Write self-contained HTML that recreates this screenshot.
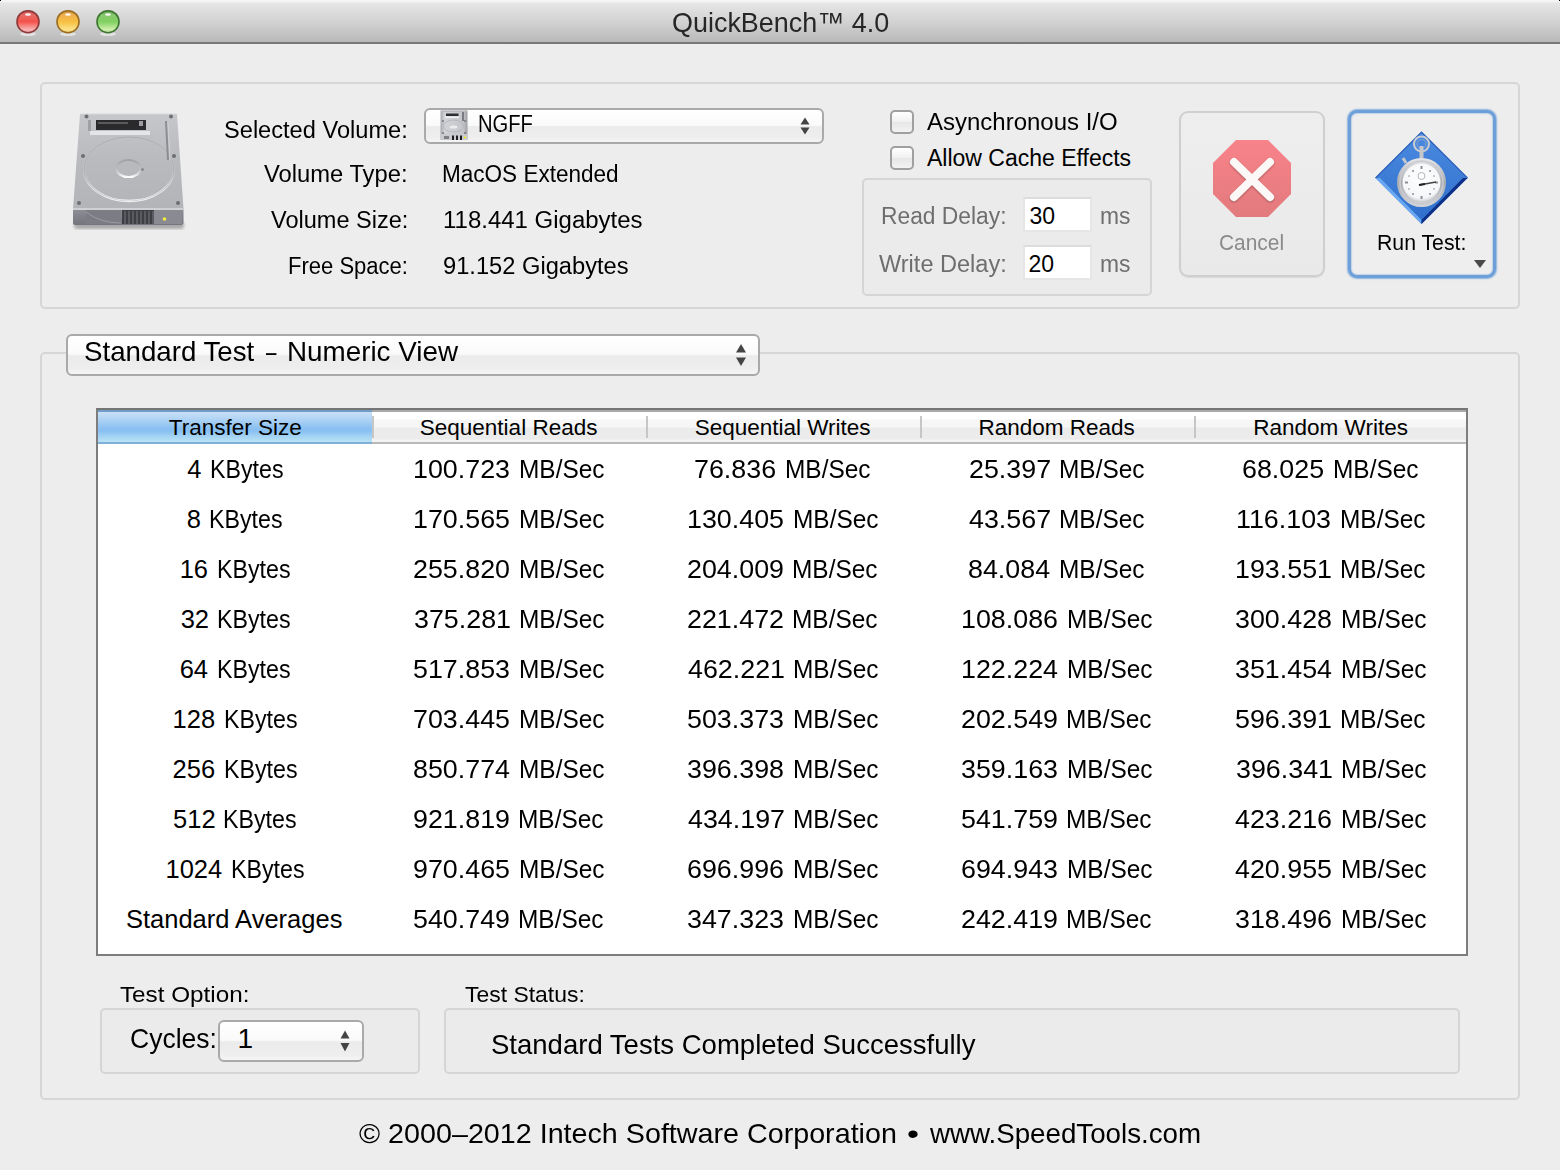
<!DOCTYPE html>
<html><head><meta charset="utf-8"><title>QuickBench 4.0</title>
<style>
html,body{margin:0;padding:0;}
body{width:1560px;height:1170px;position:relative;overflow:hidden;background:#ededed;font-family:"Liberation Sans",sans-serif;}
.t{position:absolute;white-space:nowrap;line-height:1;transform-origin:0 0;}
.a{position:absolute;box-sizing:border-box;}
#titlebar{left:0;top:0;width:1560px;height:44px;background:linear-gradient(#f6f6f6 0px,#f2f2f2 2px,#e6e6e6 3px,#d2d2d2 22px,#b9b9b9 42px);border-bottom:2px solid #787878;}
.light{position:absolute;top:10px;width:24px;height:24px;border-radius:50%;}
.grp{border:2px solid #d6d6d6;border-radius:5px;background:transparent;}
.popup{border:2px solid #a9a9a9;border-radius:6px;background:linear-gradient(#ffffff 0%,#fafafa 48%,#ebebeb 52%,#eeeeee 85%,#f5f5f5 100%);}
.cb{border:2px solid #a0a0a0;border-radius:5px;background:linear-gradient(#ffffff,#f0f0f0 50%,#e6e6e6 51%,#f3f3f3);}
.field{background:#fff;border:2px solid #e6e6e6;border-top-color:#dcdcdc;}
.inset{border:2px solid #d5d5d5;border-radius:5px;background:#ebebeb;}

</style></head><body>
<div class="a" id="titlebar"></div>
<svg class="a" style="left:0;top:0" width="140" height="44">
 <defs>
  <linearGradient id="gr" x1="0" y1="0" x2="0" y2="1"><stop offset="0" stop-color="#c84848"/><stop offset="0.2" stop-color="#e86a66"/><stop offset="0.5" stop-color="#f4524a"/><stop offset="0.85" stop-color="#f8b0b0"/><stop offset="1" stop-color="#e8a0a0"/></linearGradient>
  <linearGradient id="gy" x1="0" y1="0" x2="0" y2="1"><stop offset="0" stop-color="#c88a30"/><stop offset="0.2" stop-color="#f0b050"/><stop offset="0.5" stop-color="#f6c040"/><stop offset="0.85" stop-color="#fde288"/><stop offset="1" stop-color="#eccc70"/></linearGradient>
  <linearGradient id="gg" x1="0" y1="0" x2="0" y2="1"><stop offset="0" stop-color="#5a9a48"/><stop offset="0.2" stop-color="#88c870"/><stop offset="0.5" stop-color="#80d060"/><stop offset="0.85" stop-color="#cdeeaa"/><stop offset="1" stop-color="#b8dc98"/></linearGradient>
  <filter id="tlb"><feGaussianBlur stdDeviation="0.6"/></filter>
 </defs>
 <g filter="url(#tlb)">
 <ellipse cx="28" cy="34" rx="8" ry="2" fill="#fff" opacity="0.5"/>
 <ellipse cx="68" cy="34" rx="8" ry="2" fill="#fff" opacity="0.5"/>
 <ellipse cx="108" cy="34" rx="8" ry="2" fill="#fff" opacity="0.5"/>
 <circle cx="28" cy="21.7" r="11" fill="url(#gr)" stroke="#8c3838" stroke-width="1.6"/>
 <ellipse cx="28" cy="14.5" rx="3" ry="1.3" fill="#fff" opacity="0.9"/>
 <circle cx="68" cy="21.7" r="11" fill="url(#gy)" stroke="#9a6c20" stroke-width="1.6"/>
 <ellipse cx="68" cy="14.5" rx="3" ry="1.3" fill="#fff" opacity="0.9"/>
 <circle cx="108" cy="21.7" r="11" fill="url(#gg)" stroke="#3c7430" stroke-width="1.6"/>
 <ellipse cx="108" cy="14.5" rx="3" ry="1.3" fill="#fff" opacity="0.9"/>
 </g>
</svg>
<!-- top group -->
<div class="a grp" style="left:40px;top:82px;width:1480px;height:227px;"></div>
<!-- HDD icon -->
<svg class="a" style="left:60px;top:105px" width="140" height="135" viewBox="60 105 140 135">
 <defs>
  <linearGradient id="hddtop" x1="0" y1="0" x2="0" y2="1"><stop offset="0" stop-color="#c6c7cb"/><stop offset="0.5" stop-color="#b9babe"/><stop offset="1" stop-color="#b3b4b8"/></linearGradient>
  <linearGradient id="hddfront" x1="0" y1="0" x2="0" y2="1"><stop offset="0" stop-color="#8e8f96"/><stop offset="1" stop-color="#74757c"/></linearGradient>
  <linearGradient id="platter" x1="0" y1="0" x2="0" y2="1"><stop offset="0" stop-color="#ffffff" stop-opacity="0"/><stop offset="0.55" stop-color="#ffffff" stop-opacity="0.15"/><stop offset="1" stop-color="#ffffff" stop-opacity="0.95"/></linearGradient>
  <linearGradient id="hub" x1="0" y1="0" x2="0" y2="1"><stop offset="0" stop-color="#8e8f94" stop-opacity="0.6"/><stop offset="0.5" stop-color="#c0c0c4" stop-opacity="0.3"/><stop offset="1" stop-color="#ffffff" stop-opacity="1"/></linearGradient>
  <filter id="blur1"><feGaussianBlur stdDeviation="1.6"/></filter>
 </defs>
 <rect x="74" y="222" width="110" height="7" rx="3" fill="#000" opacity="0.28" filter="url(#blur1)"/>
 <path d="M80 114 L177 114 L183.5 209 L73 209 Z" fill="url(#hddtop)"/>
 <path d="M80 114 L177 114" stroke="#d6d7da" stroke-width="1"/>
 <path d="M73 209 L183.5 209 L183.5 223 Q183.5 225 181 225 L75 225 Q73 225 73 223 Z" fill="url(#hddfront)"/>
 <rect x="73" y="208" width="110.5" height="2" fill="#cfd0d4"/>
 <path d="M86 210 L86 224 L121 224 L121 210" fill="#7c7d84"/>
 <path d="M86 212 Q100 223 121 223" fill="none" stroke="#9a9ba2" stroke-width="1"/>
 <rect x="122" y="210" width="32" height="14" fill="#3e3f44"/>
 <g stroke="#6e6f76" stroke-width="1.2"><line x1="125" y1="211" x2="125" y2="224"/><line x1="129" y1="211" x2="129" y2="224"/><line x1="133" y1="211" x2="133" y2="224"/><line x1="137" y1="211" x2="137" y2="224"/><line x1="141" y1="211" x2="141" y2="224"/><line x1="145" y1="211" x2="145" y2="224"/><line x1="149" y1="211" x2="149" y2="224"/><line x1="153" y1="211" x2="153" y2="224"/></g>
 <rect x="154" y="210" width="28" height="14" fill="#8a8b92"/>
 <circle cx="164.5" cy="219" r="1.8" fill="#f2ec3a"/>
 <rect x="88" y="120" width="3" height="11" fill="#9fa0a4"/>
 <rect x="96" y="120" width="50" height="10" fill="#2a2a2c"/>
 <rect x="98" y="122" width="30" height="2" fill="#5a5a5e"/>
 <rect x="139" y="121" width="4" height="5" fill="#9c9ca0"/>
 <rect x="90" y="131" width="60" height="4" fill="#e4e5e8"/>
 <ellipse cx="129" cy="169" rx="45" ry="32" fill="none" stroke="url(#platter)" stroke-width="2.4"/>
 <ellipse cx="129" cy="169" rx="45" ry="32" fill="none" stroke="#8a8b90" stroke-width="1" opacity="0.35"/>
 <ellipse cx="128.5" cy="168.5" rx="12" ry="8.5" fill="none" stroke="url(#hub)" stroke-width="2.2"/>
 <path d="M166 121 L168 160" stroke="#8c8d92" stroke-width="2"/>
 <path d="M168 122 L170 160" stroke="#d0d1d5" stroke-width="1"/>
 <g fill="#6d6e73"><circle cx="86.5" cy="116.5" r="2"/><circle cx="171" cy="116.5" r="2"/><circle cx="83" cy="156" r="2"/><circle cx="174" cy="156" r="2"/><circle cx="79" cy="203" r="2"/><circle cx="178" cy="203" r="2"/></g>
 <circle cx="142.5" cy="169.5" r="1.5" fill="#8a8b90"/>
</svg>
<!-- volume popup -->
<div class="a popup" style="left:424px;top:108px;width:400px;height:36px;"></div>
<svg class="a" style="left:436px;top:108px" width="36" height="36" viewBox="436 108 36 36">
 <defs><linearGradient id="mini" x1="0" y1="0" x2="1" y2="0"><stop offset="0" stop-color="#a8a9ae"/><stop offset="0.15" stop-color="#d2d3d7"/><stop offset="0.85" stop-color="#c4c5ca"/><stop offset="1" stop-color="#9c9da2"/></linearGradient></defs>
 <rect x="440.5" y="110.5" width="27" height="29" fill="url(#mini)"/>
 <rect x="441" y="110.5" width="26" height="1.5" fill="#b8b9bd"/>
 <rect x="446" y="113.5" width="12.5" height="2.5" fill="#2e2e30"/>
 <rect x="445" y="116.5" width="14" height="1.5" fill="#f2f2f4"/>
 <rect x="462" y="112" width="2" height="9" fill="#7a7b80"/>
 <g fill="#75767b"><circle cx="443" cy="121" r="1"/><circle cx="465" cy="121" r="1"/><circle cx="443" cy="133" r="1"/><circle cx="465" cy="133" r="1"/></g>
 <ellipse cx="453.5" cy="127" rx="4" ry="1.6" fill="#ececef"/>
 <ellipse cx="453.5" cy="126" rx="10" ry="6" fill="none" stroke="#b0b1b6" stroke-width="0.8"/>
 <rect x="440.5" y="134" width="27" height="6" fill="#c9cace"/>
 <rect x="444" y="136" width="5" height="3" fill="#7e7f84"/>
 <rect x="452" y="135.5" width="2" height="4.5" fill="#1e1e20"/>
 <rect x="456" y="135.5" width="2" height="4.5" fill="#1e1e20"/>
 <rect x="460" y="135.5" width="2" height="4.5" fill="#1e1e20"/>
 <circle cx="465" cy="137.5" r="1.1" fill="#f4f020"/>
</svg>
<svg class="a" style="left:795px;top:110px" width="20" height="30" viewBox="795 110 20 30"><path d="M800.5 124.5 L809.5 124.5 L805 117.5 Z" fill="#444"/><path d="M800.5 127.5 L809.5 127.5 L805 134.5 Z" fill="#444"/></svg>
<!-- checkboxes -->
<div class="a cb" style="left:890px;top:110px;width:24px;height:24px;"></div>
<div class="a cb" style="left:890px;top:146px;width:24px;height:24px;"></div>
<!-- delay box -->
<div class="a inset" style="left:862px;top:178px;width:290px;height:118px;"></div>
<div class="a field" style="left:1023px;top:197px;width:69px;height:35px;"></div>
<div class="a field" style="left:1023px;top:245px;width:69px;height:35px;"></div>
<!-- cancel button -->
<div class="a" style="left:1179px;top:111px;width:146px;height:166px;border:2px solid #cfcfcf;border-radius:9px;background:linear-gradient(#eeeeee,#e9e9e9);box-shadow:0 1px 1px rgba(0,0,0,0.08);"></div>
<svg class="a" style="left:1205px;top:132px" width="94" height="94" viewBox="1205 132 94 94">
 <defs><linearGradient id="stop" x1="0" y1="0" x2="0" y2="1"><stop offset="0" stop-color="#f8838a"/><stop offset="1" stop-color="#e27a7d"/></linearGradient>
 <filter id="xsh" x="-20%" y="-20%" width="140%" height="140%"><feGaussianBlur in="SourceAlpha" stdDeviation="1"/><feOffset dy="1"/><feComponentTransfer><feFuncA type="linear" slope="0.35"/></feComponentTransfer><feMerge><feMergeNode/><feMergeNode in="SourceGraphic"/></feMerge></filter></defs>
 <polygon points="1236,140 1268,140 1291,163 1291,194 1268,217 1236,217 1213,194 1213,163" fill="url(#stop)"/>
 <g stroke="#fdf8f8" stroke-width="8" stroke-linecap="round" filter="url(#xsh)"><line x1="1234" y1="162" x2="1270" y2="197"/><line x1="1270" y1="162" x2="1234" y2="197"/></g>
</svg>
<!-- run test button -->
<div class="a" style="left:1348px;top:110px;width:148px;height:168px;border:3px solid #6d9fd8;border-radius:9px;background:#eeeeee;box-shadow:0 0 1.5px 1px rgba(109,159,216,0.75), inset 0 0 1.5px 0.5px rgba(109,159,216,0.6);"></div>
<svg class="a" style="left:1370px;top:125px" width="105" height="105" viewBox="1370 125 105 105">
 <defs>
  <linearGradient id="dia" x1="0" y1="0" x2="0" y2="1"><stop offset="0" stop-color="#4a8ae0"/><stop offset="1" stop-color="#2f6fcc"/></linearGradient>
  <radialGradient id="face" cx="50%" cy="40%" r="60%"><stop offset="0" stop-color="#ffffff"/><stop offset="0.85" stop-color="#f4f6f8"/><stop offset="1" stop-color="#d0d3d8"/></radialGradient>
  <linearGradient id="ring" x1="0" y1="0" x2="0" y2="1"><stop offset="0" stop-color="#e8e8ea"/><stop offset="0.5" stop-color="#a9abb0"/><stop offset="1" stop-color="#d5d6d9"/></linearGradient>
 </defs>
 <polygon points="1421.5,132 1467.5,178 1421.5,224 1375.5,178" fill="url(#dia)"/>
 <path d="M1375.5 178 L1421.5 224 L1421.5 220 L1380 178 Z" fill="#6aa8f2"/>
 <path d="M1467.5 178 L1421.5 224 L1421.5 220 L1463 178 Z" fill="#0d2f86"/>
 <path d="M1375.5 178 L1421.5 132 L1467.5 178" fill="none" stroke="#2a5fb8" stroke-width="1.2"/>
 <circle cx="1421.5" cy="144" r="7.5" fill="none" stroke="#c9ccd2" stroke-width="2"/>
 <circle cx="1421.5" cy="144" r="4.5" fill="none" stroke="#8fa6c8" stroke-width="1"/>
 <rect x="1419.5" y="146" width="4" height="12" fill="#c4c6ca"/>
 <line x1="1403" y1="158" x2="1406" y2="163" stroke="#c4c6ca" stroke-width="3"/>
 <circle cx="1421.5" cy="182.5" r="24.5" fill="url(#ring)"/>
 <circle cx="1421.5" cy="182.5" r="21.5" fill="none" stroke="#c8cacf" stroke-width="1.5"/>
 <circle cx="1421.5" cy="182.5" r="19" fill="url(#face)"/>
 <g fill="#8a8e96"><rect x="1420.5" y="166" width="2" height="3"/><rect x="1420.5" y="196" width="2" height="3"/><rect x="1405" y="181.5" width="3" height="2"/><rect x="1435" y="181.5" width="3" height="2"/>
 <circle cx="1413" cy="171" r="1"/><circle cx="1430" cy="171" r="1"/><circle cx="1413" cy="194" r="1"/><circle cx="1430" cy="194" r="1"/><circle cx="1409" cy="176" r="0.8"/><circle cx="1434" cy="176" r="0.8"/><circle cx="1409" cy="189" r="0.8"/><circle cx="1434" cy="189" r="0.8"/></g>
 <circle cx="1421.5" cy="176" r="3.5" fill="none" stroke="#b0b4bb" stroke-width="1"/>
 <line x1="1419" y1="185" x2="1436" y2="182" stroke="#444" stroke-width="1.6"/>
 <line x1="1419" y1="185" x2="1425" y2="184" stroke="#222" stroke-width="2.2"/>
</svg>
<svg class="a" style="left:1472px;top:258px" width="16" height="12"><path d="M2 2 L14 2 L8 10 Z" fill="#4a4a4a"/></svg>
<!-- bottom group -->
<div class="a grp" style="left:40px;top:352px;width:1480px;height:748px;"></div>
<div class="a popup" style="left:66px;top:334px;width:694px;height:42px;"></div>
<svg class="a" style="left:730px;top:338px" width="22" height="34" viewBox="730 338 22 34"><path d="M736 352.5 L746 352.5 L741 344 Z" fill="#444"/><path d="M736 357.5 L746 357.5 L741 366 Z" fill="#444"/></svg>
<!-- table -->
<div class="a" style="left:96px;top:408px;width:1372px;height:548px;border:2px solid #7d7d7d;border-top-color:#757575;background:#fff;"></div>
<div class="a" style="left:98px;top:410px;width:1368px;height:34px;background:linear-gradient(#ffffff 0px,#ffffff 7px,#f6f6f6 8px,#f6f6f6 15px,#ebebeb 16px,#ececec 27px,#f3f3f3 28px);border-top:2px solid #a9a9a9;border-bottom:2px solid #b9b9b9;"></div>
<div class="a" style="left:98px;top:410px;width:274px;height:34px;background:linear-gradient(#c9e1f7 0px,#a9d0f3 9px,#8cc1f2 16px,#88c0f2 19px,#a2d1f3 24px,#b9e3f4 30px);border-top:2px solid #6f9cc6;border-bottom:2px solid #80b0d8;"></div>
<div class="a" style="left:372px;top:416px;width:2px;height:22px;background:#c6c6c6;"></div>
<div class="a" style="left:646px;top:416px;width:2px;height:22px;background:#c6c6c6;"></div>
<div class="a" style="left:920px;top:416px;width:2px;height:22px;background:#c6c6c6;"></div>
<div class="a" style="left:1194px;top:416px;width:2px;height:22px;background:#c6c6c6;"></div>
<!-- bottom controls -->
<div class="a inset" style="left:100px;top:1008px;width:320px;height:66px;"></div>
<div class="a popup" style="left:218px;top:1020px;width:146px;height:42px;"></div>
<svg class="a" style="left:335px;top:1025px" width="20" height="32" viewBox="335 1025 20 32"><path d="M340.5 1038.5 L349.5 1038.5 L345 1030.5 Z" fill="#444"/><path d="M340.5 1043 L349.5 1043 L345 1051.5 Z" fill="#444"/></svg>
<div class="a inset" style="left:444px;top:1008px;width:1016px;height:66px;"></div>
<div class="a" style="left:0;top:0;width:1px;height:1px;background:#000;"></div>
<div class="a" style="left:1559px;top:0;width:1px;height:1px;background:#000;"></div>

<div class="t" style="left:672.04px;top:8.70px;font-size:28px;color:#262626;transform:scaleX(0.9621);">QuickBench™ 4.0</div>
<div class="t" style="left:224.47px;top:118.70px;font-size:23px;color:#000;transform:scaleX(1.0265);">Selected Volume:</div>
<div class="t" style="left:264.30px;top:162.70px;font-size:23px;color:#000;transform:scaleX(1.0328);">Volume Type:</div>
<div class="t" style="left:270.80px;top:209.20px;font-size:23px;color:#000;transform:scaleX(1.0230);">Volume Size:</div>
<div class="t" style="left:288.04px;top:255.20px;font-size:23px;color:#000;transform:scaleX(0.9577);">Free Space:</div>
<div class="t" style="left:441.62px;top:162.70px;font-size:23px;color:#000;transform:scaleX(0.9800);">MacOS Extended</div>
<div class="t" style="left:442.96px;top:209.20px;font-size:23px;color:#000;transform:scaleX(1.0428);">118.441 Gigabytes</div>
<div class="t" style="left:442.97px;top:255.20px;font-size:23px;color:#000;transform:scaleX(1.0291);">91.152 Gigabytes</div>
<div class="t" style="left:478.12px;top:112.70px;font-size:23px;color:#000;transform:scaleX(0.8773);">NGFF</div>
<div class="t" style="left:927.00px;top:110.70px;font-size:23px;color:#000;transform:scaleX(1.0428);">Asynchronous I/O</div>
<div class="t" style="left:927.00px;top:147.20px;font-size:23px;color:#000;">Allow Cache Effects</div>
<div class="t" style="left:880.81px;top:204.50px;font-size:23px;color:#6e6e6e;transform:scaleX(0.9913);">Read Delay:</div>
<div class="t" style="left:878.70px;top:252.70px;font-size:23px;color:#6e6e6e;transform:scaleX(1.0232);">Write Delay:</div>
<div class="t" style="left:1029.50px;top:204.50px;font-size:23px;color:#000;">30</div>
<div class="t" style="left:1028.50px;top:252.70px;font-size:23px;color:#000;">20</div>
<div class="t" style="left:1100.01px;top:204.50px;font-size:23px;color:#6e6e6e;transform:scaleX(0.9945);">ms</div>
<div class="t" style="left:1100.01px;top:252.70px;font-size:23px;color:#6e6e6e;transform:scaleX(0.9945);">ms</div>
<div class="t" style="left:1218.75px;top:231.80px;font-size:22px;color:#8a8a8a;transform:scaleX(0.9505);">Cancel</div>
<div class="t" style="left:1377.03px;top:231.80px;font-size:22px;color:#000;transform:scaleX(0.9657);">Run Test:</div>
<div class="t" style="left:84.41px;top:338.20px;font-size:28px;color:#000;transform:scaleX(0.9884);">Standard Test</div>
<div class="t" style="left:266.20px;top:338.20px;font-size:28px;color:#000;transform:scaleX(0.6687);">–</div>
<div class="t" style="left:287.21px;top:338.20px;font-size:28px;color:#000;transform:scaleX(0.9931);">Numeric View</div>
<div class="t" style="left:168.78px;top:417.38px;font-size:22.5px;color:#000;">Transfer Size</div>
<div class="t" style="left:419.81px;top:417.38px;font-size:22.5px;color:#000;">Sequential Reads</div>
<div class="t" style="left:694.66px;top:417.38px;font-size:22.5px;color:#000;">Sequential Writes</div>
<div class="t" style="left:978.46px;top:417.38px;font-size:22.5px;color:#000;">Random Reads</div>
<div class="t" style="left:1253.31px;top:417.38px;font-size:22.5px;color:#000;">Random Writes</div>
<div class="t" style="left:125.95px;top:907.33px;font-size:25.5px;color:#000;">Standard Averages</div>
<div class="t" style="left:187.24px;top:457.32px;font-size:25.5px;color:#000;">4</div>
<div class="t" style="left:209.92px;top:457.32px;font-size:25.5px;color:#000;transform:scaleX(0.9100);">KBytes</div>
<div class="t" style="left:412.51px;top:457.32px;font-size:25.5px;color:#000;transform:scaleX(1.0520);">100.723</div>
<div class="t" style="left:518.67px;top:457.32px;font-size:25.5px;color:#000;transform:scaleX(0.9580);">MB/Sec</div>
<div class="t" style="left:693.97px;top:457.32px;font-size:25.5px;color:#000;transform:scaleX(1.0520);">76.836</div>
<div class="t" style="left:785.21px;top:457.32px;font-size:25.5px;color:#000;transform:scaleX(0.9580);">MB/Sec</div>
<div class="t" style="left:968.50px;top:457.32px;font-size:25.5px;color:#000;transform:scaleX(1.0520);">25.397</div>
<div class="t" style="left:1058.69px;top:457.32px;font-size:25.5px;color:#000;transform:scaleX(0.9580);">MB/Sec</div>
<div class="t" style="left:1241.97px;top:457.32px;font-size:25.5px;color:#000;transform:scaleX(1.0520);">68.025</div>
<div class="t" style="left:1333.21px;top:457.32px;font-size:25.5px;color:#000;transform:scaleX(0.9580);">MB/Sec</div>
<div class="t" style="left:186.74px;top:507.32px;font-size:25.5px;color:#000;">8</div>
<div class="t" style="left:209.42px;top:507.32px;font-size:25.5px;color:#000;transform:scaleX(0.9100);">KBytes</div>
<div class="t" style="left:412.51px;top:507.32px;font-size:25.5px;color:#000;transform:scaleX(1.0520);">170.565</div>
<div class="t" style="left:518.67px;top:507.32px;font-size:25.5px;color:#000;transform:scaleX(0.9580);">MB/Sec</div>
<div class="t" style="left:686.51px;top:507.32px;font-size:25.5px;color:#000;transform:scaleX(1.0520);">130.405</div>
<div class="t" style="left:792.67px;top:507.32px;font-size:25.5px;color:#000;transform:scaleX(0.9580);">MB/Sec</div>
<div class="t" style="left:969.02px;top:507.32px;font-size:25.5px;color:#000;transform:scaleX(1.0520);">43.567</div>
<div class="t" style="left:1059.21px;top:507.32px;font-size:25.5px;color:#000;transform:scaleX(0.9580);">MB/Sec</div>
<div class="t" style="left:1235.51px;top:507.32px;font-size:25.5px;color:#000;transform:scaleX(1.0520);">116.103</div>
<div class="t" style="left:1339.68px;top:507.32px;font-size:25.5px;color:#000;transform:scaleX(0.9580);">MB/Sec</div>
<div class="t" style="left:179.65px;top:557.33px;font-size:25.5px;color:#000;">16</div>
<div class="t" style="left:216.52px;top:557.33px;font-size:25.5px;color:#000;transform:scaleX(0.9100);">KBytes</div>
<div class="t" style="left:412.51px;top:557.33px;font-size:25.5px;color:#000;transform:scaleX(1.0520);">255.820</div>
<div class="t" style="left:518.67px;top:557.33px;font-size:25.5px;color:#000;transform:scaleX(0.9580);">MB/Sec</div>
<div class="t" style="left:687.04px;top:557.33px;font-size:25.5px;color:#000;transform:scaleX(1.0520);">204.009</div>
<div class="t" style="left:792.15px;top:557.33px;font-size:25.5px;color:#000;transform:scaleX(0.9580);">MB/Sec</div>
<div class="t" style="left:967.97px;top:557.33px;font-size:25.5px;color:#000;transform:scaleX(1.0520);">84.084</div>
<div class="t" style="left:1059.21px;top:557.33px;font-size:25.5px;color:#000;transform:scaleX(0.9580);">MB/Sec</div>
<div class="t" style="left:1235.04px;top:557.33px;font-size:25.5px;color:#000;transform:scaleX(1.0520);">193.551</div>
<div class="t" style="left:1340.15px;top:557.33px;font-size:25.5px;color:#000;transform:scaleX(0.9580);">MB/Sec</div>
<div class="t" style="left:180.65px;top:607.33px;font-size:25.5px;color:#000;">32</div>
<div class="t" style="left:216.52px;top:607.33px;font-size:25.5px;color:#000;transform:scaleX(0.9100);">KBytes</div>
<div class="t" style="left:413.56px;top:607.33px;font-size:25.5px;color:#000;transform:scaleX(1.0520);">375.281</div>
<div class="t" style="left:518.67px;top:607.33px;font-size:25.5px;color:#000;transform:scaleX(0.9580);">MB/Sec</div>
<div class="t" style="left:687.04px;top:607.33px;font-size:25.5px;color:#000;transform:scaleX(1.0520);">221.472</div>
<div class="t" style="left:792.15px;top:607.33px;font-size:25.5px;color:#000;transform:scaleX(0.9580);">MB/Sec</div>
<div class="t" style="left:960.51px;top:607.33px;font-size:25.5px;color:#000;transform:scaleX(1.0520);">108.086</div>
<div class="t" style="left:1066.67px;top:607.33px;font-size:25.5px;color:#000;transform:scaleX(0.9580);">MB/Sec</div>
<div class="t" style="left:1235.04px;top:607.33px;font-size:25.5px;color:#000;transform:scaleX(1.0520);">300.428</div>
<div class="t" style="left:1341.20px;top:607.33px;font-size:25.5px;color:#000;transform:scaleX(0.9580);">MB/Sec</div>
<div class="t" style="left:179.65px;top:657.33px;font-size:25.5px;color:#000;">64</div>
<div class="t" style="left:216.52px;top:657.33px;font-size:25.5px;color:#000;transform:scaleX(0.9100);">KBytes</div>
<div class="t" style="left:412.51px;top:657.33px;font-size:25.5px;color:#000;transform:scaleX(1.0520);">517.853</div>
<div class="t" style="left:518.67px;top:657.33px;font-size:25.5px;color:#000;transform:scaleX(0.9580);">MB/Sec</div>
<div class="t" style="left:687.56px;top:657.33px;font-size:25.5px;color:#000;transform:scaleX(1.0520);">462.221</div>
<div class="t" style="left:792.67px;top:657.33px;font-size:25.5px;color:#000;transform:scaleX(0.9580);">MB/Sec</div>
<div class="t" style="left:960.51px;top:657.33px;font-size:25.5px;color:#000;transform:scaleX(1.0520);">122.224</div>
<div class="t" style="left:1066.67px;top:657.33px;font-size:25.5px;color:#000;transform:scaleX(0.9580);">MB/Sec</div>
<div class="t" style="left:1235.04px;top:657.33px;font-size:25.5px;color:#000;transform:scaleX(1.0520);">351.454</div>
<div class="t" style="left:1341.20px;top:657.33px;font-size:25.5px;color:#000;transform:scaleX(0.9580);">MB/Sec</div>
<div class="t" style="left:172.56px;top:707.33px;font-size:25.5px;color:#000;">128</div>
<div class="t" style="left:223.61px;top:707.33px;font-size:25.5px;color:#000;transform:scaleX(0.9100);">KBytes</div>
<div class="t" style="left:412.51px;top:707.33px;font-size:25.5px;color:#000;transform:scaleX(1.0520);">703.445</div>
<div class="t" style="left:518.67px;top:707.33px;font-size:25.5px;color:#000;transform:scaleX(0.9580);">MB/Sec</div>
<div class="t" style="left:686.51px;top:707.33px;font-size:25.5px;color:#000;transform:scaleX(1.0520);">503.373</div>
<div class="t" style="left:792.67px;top:707.33px;font-size:25.5px;color:#000;transform:scaleX(0.9580);">MB/Sec</div>
<div class="t" style="left:961.04px;top:707.33px;font-size:25.5px;color:#000;transform:scaleX(1.0520);">202.549</div>
<div class="t" style="left:1066.15px;top:707.33px;font-size:25.5px;color:#000;transform:scaleX(0.9580);">MB/Sec</div>
<div class="t" style="left:1235.04px;top:707.33px;font-size:25.5px;color:#000;transform:scaleX(1.0520);">596.391</div>
<div class="t" style="left:1340.15px;top:707.33px;font-size:25.5px;color:#000;transform:scaleX(0.9580);">MB/Sec</div>
<div class="t" style="left:172.56px;top:757.33px;font-size:25.5px;color:#000;">256</div>
<div class="t" style="left:223.61px;top:757.33px;font-size:25.5px;color:#000;transform:scaleX(0.9100);">KBytes</div>
<div class="t" style="left:412.51px;top:757.33px;font-size:25.5px;color:#000;transform:scaleX(1.0520);">850.774</div>
<div class="t" style="left:518.67px;top:757.33px;font-size:25.5px;color:#000;transform:scaleX(0.9580);">MB/Sec</div>
<div class="t" style="left:687.04px;top:757.33px;font-size:25.5px;color:#000;transform:scaleX(1.0520);">396.398</div>
<div class="t" style="left:793.20px;top:757.33px;font-size:25.5px;color:#000;transform:scaleX(0.9580);">MB/Sec</div>
<div class="t" style="left:961.04px;top:757.33px;font-size:25.5px;color:#000;transform:scaleX(1.0520);">359.163</div>
<div class="t" style="left:1067.20px;top:757.33px;font-size:25.5px;color:#000;transform:scaleX(0.9580);">MB/Sec</div>
<div class="t" style="left:1235.56px;top:757.33px;font-size:25.5px;color:#000;transform:scaleX(1.0520);">396.341</div>
<div class="t" style="left:1340.67px;top:757.33px;font-size:25.5px;color:#000;transform:scaleX(0.9580);">MB/Sec</div>
<div class="t" style="left:173.06px;top:807.33px;font-size:25.5px;color:#000;">512</div>
<div class="t" style="left:223.11px;top:807.33px;font-size:25.5px;color:#000;transform:scaleX(0.9100);">KBytes</div>
<div class="t" style="left:413.04px;top:807.33px;font-size:25.5px;color:#000;transform:scaleX(1.0520);">921.819</div>
<div class="t" style="left:518.15px;top:807.33px;font-size:25.5px;color:#000;transform:scaleX(0.9580);">MB/Sec</div>
<div class="t" style="left:687.56px;top:807.33px;font-size:25.5px;color:#000;transform:scaleX(1.0520);">434.197</div>
<div class="t" style="left:792.67px;top:807.33px;font-size:25.5px;color:#000;transform:scaleX(0.9580);">MB/Sec</div>
<div class="t" style="left:961.04px;top:807.33px;font-size:25.5px;color:#000;transform:scaleX(1.0520);">541.759</div>
<div class="t" style="left:1066.15px;top:807.33px;font-size:25.5px;color:#000;transform:scaleX(0.9580);">MB/Sec</div>
<div class="t" style="left:1235.04px;top:807.33px;font-size:25.5px;color:#000;transform:scaleX(1.0520);">423.216</div>
<div class="t" style="left:1341.20px;top:807.33px;font-size:25.5px;color:#000;transform:scaleX(0.9580);">MB/Sec</div>
<div class="t" style="left:165.47px;top:857.33px;font-size:25.5px;color:#000;">1024</div>
<div class="t" style="left:230.70px;top:857.33px;font-size:25.5px;color:#000;transform:scaleX(0.9100);">KBytes</div>
<div class="t" style="left:412.51px;top:857.33px;font-size:25.5px;color:#000;transform:scaleX(1.0520);">970.465</div>
<div class="t" style="left:518.67px;top:857.33px;font-size:25.5px;color:#000;transform:scaleX(0.9580);">MB/Sec</div>
<div class="t" style="left:686.51px;top:857.33px;font-size:25.5px;color:#000;transform:scaleX(1.0520);">696.996</div>
<div class="t" style="left:792.67px;top:857.33px;font-size:25.5px;color:#000;transform:scaleX(0.9580);">MB/Sec</div>
<div class="t" style="left:960.51px;top:857.33px;font-size:25.5px;color:#000;transform:scaleX(1.0520);">694.943</div>
<div class="t" style="left:1066.67px;top:857.33px;font-size:25.5px;color:#000;transform:scaleX(0.9580);">MB/Sec</div>
<div class="t" style="left:1235.04px;top:857.33px;font-size:25.5px;color:#000;transform:scaleX(1.0520);">420.955</div>
<div class="t" style="left:1341.20px;top:857.33px;font-size:25.5px;color:#000;transform:scaleX(0.9580);">MB/Sec</div>
<div class="t" style="left:413.04px;top:907.33px;font-size:25.5px;color:#000;transform:scaleX(1.0520);">540.749</div>
<div class="t" style="left:518.15px;top:907.33px;font-size:25.5px;color:#000;transform:scaleX(0.9580);">MB/Sec</div>
<div class="t" style="left:687.04px;top:907.33px;font-size:25.5px;color:#000;transform:scaleX(1.0520);">347.323</div>
<div class="t" style="left:793.20px;top:907.33px;font-size:25.5px;color:#000;transform:scaleX(0.9580);">MB/Sec</div>
<div class="t" style="left:961.04px;top:907.33px;font-size:25.5px;color:#000;transform:scaleX(1.0520);">242.419</div>
<div class="t" style="left:1066.15px;top:907.33px;font-size:25.5px;color:#000;transform:scaleX(0.9580);">MB/Sec</div>
<div class="t" style="left:1235.04px;top:907.33px;font-size:25.5px;color:#000;transform:scaleX(1.0520);">318.496</div>
<div class="t" style="left:1341.20px;top:907.33px;font-size:25.5px;color:#000;transform:scaleX(0.9580);">MB/Sec</div>
<div class="t" style="left:120.40px;top:983.59px;font-size:22.6px;color:#000;transform:scaleX(1.0731);">Test Option:</div>
<div class="t" style="left:465.20px;top:983.59px;font-size:22.6px;color:#000;transform:scaleX(1.0149);">Test Status:</div>
<div class="t" style="left:130.05px;top:1024.70px;font-size:28px;color:#000;transform:scaleX(0.9470);">Cycles:</div>
<div class="t" style="left:237.40px;top:1024.70px;font-size:28px;color:#000;">1</div>
<div class="t" style="left:491.02px;top:1030.70px;font-size:28px;color:#000;transform:scaleX(0.9830);">Standard Tests Completed Successfully</div>
<div class="t" style="left:359.40px;top:1120.20px;font-size:28px;color:#000;transform:scaleX(1.0246);">© 2000–2012 Intech Software Corporation</div>
<div class="t" style="left:907.17px;top:1120.20px;font-size:28px;color:#000;transform:scaleX(1.2250);">•</div>
<div class="t" style="left:930.49px;top:1120.20px;font-size:28px;color:#000;transform:scaleX(0.9898);">www.SpeedTools.com</div>
</body></html>
